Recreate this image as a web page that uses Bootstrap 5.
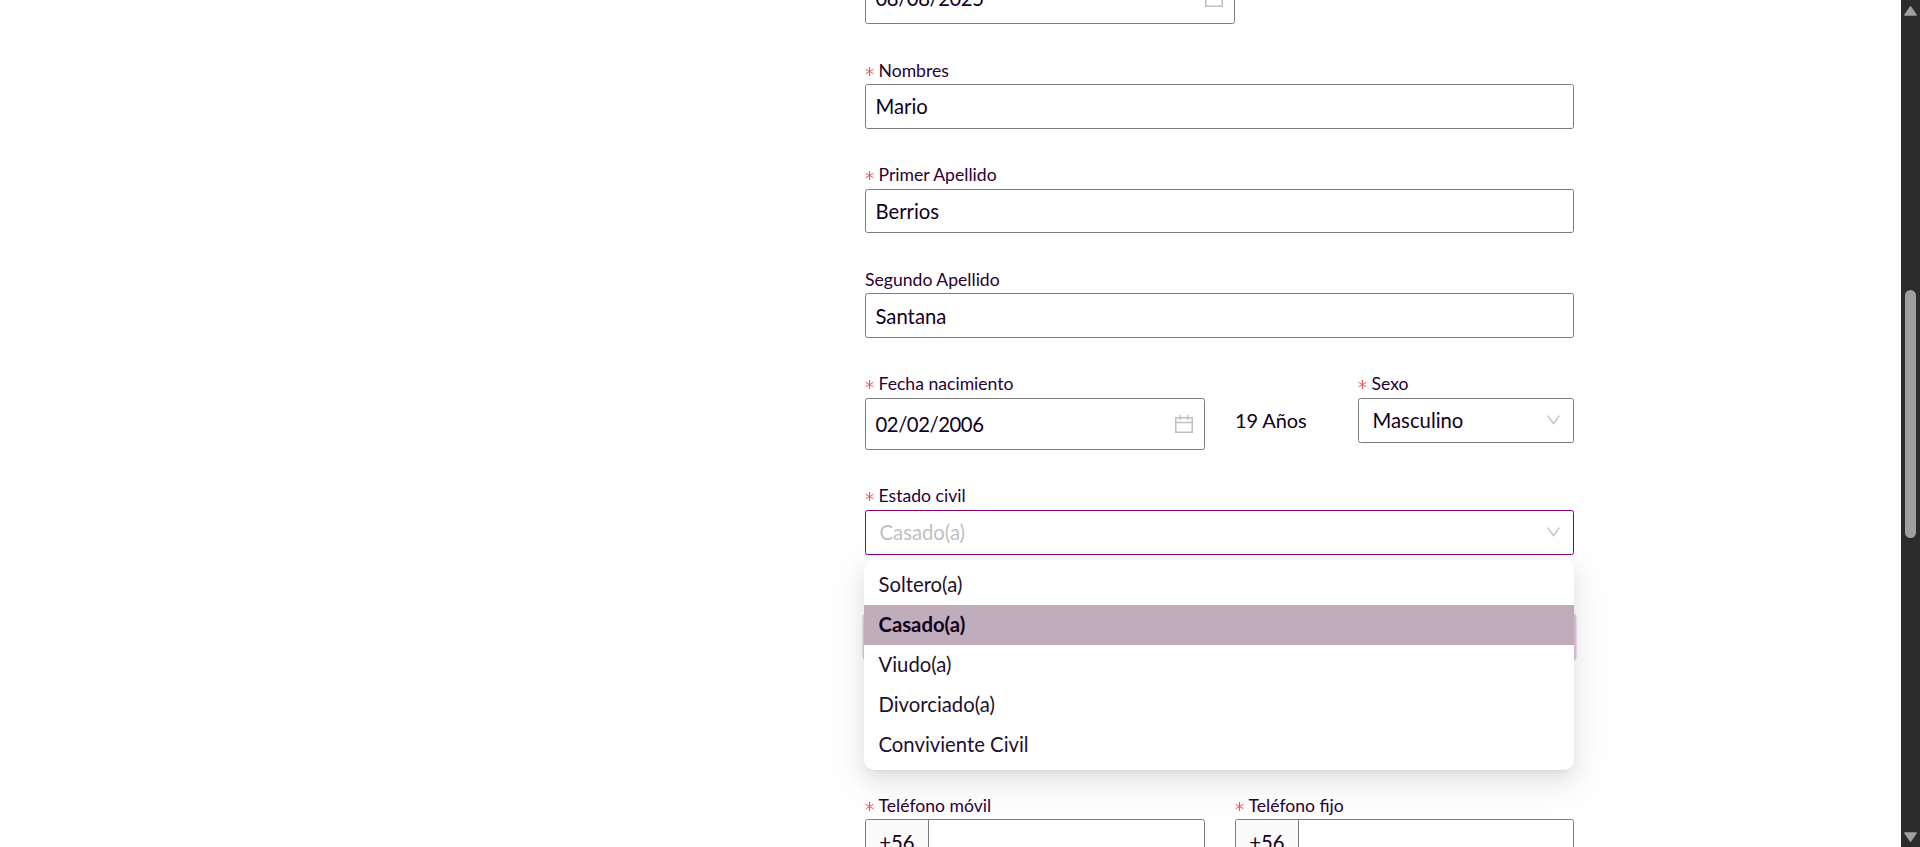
<!DOCTYPE html>
<html lang="es">
<head>
<meta charset="utf-8">
<meta name="viewport" content="width=device-width, initial-scale=1">
<title>Datos personales</title>
<link href="https://cdn.jsdelivr.net/npm/bootstrap@5.3.0/dist/css/bootstrap.min.css" rel="stylesheet">
<style>
  body { font-family: Lato, "Liberation Sans", sans-serif; font-size: 20px; color: #12001c; background: #fff; }
  .viewport { height: 847px; }
  .form-area { padding-left: 865px; padding-right: 327px; }
  .form-body { margin-top: -55.1px; }
  .field-label { display: block; height: 27.5px; line-height: 27.5px; font-size: 17.6px; color: #2a0035; white-space: nowrap; }
  .required-mark { width: 9px; height: 9px; margin-right: 4.5px; display: inline-block; vertical-align: 1px; }
  .field { margin-bottom: 32.5px; }
  .box { height: 44.5px; padding: 0 9.5px; border: 1px solid #7d7d80; border-radius: 2.5px; font-size: 20.3px; line-height: 1; color: #12001c; background: #fff; }
  .box-first { padding-bottom: 2px; }
  .box-date { height: 52px; padding-right: 11px; }
  .box-date span { letter-spacing: -.45px; }
  .box-select { height: 45px; padding: 0 13px 1px 13.5px; }
  .box-open { border-color: #800080; color: #bfbfbf; }
  .box-glow { border-color: #a44aa8; box-shadow: 0 0 0 2.5px rgba(128, 0, 128, .22); }
  .col-date-wide { width: 370px; }
  .col-half { width: 340px; }
  .col-sex { width: 216px; }
  .col-right { width: 339px; }
  .age { padding-top: 40px; line-height: 1; margin-left: 30px; margin-right: auto; letter-spacing: -.1px; }
  .box-phone { height: 52px; padding: 0; overflow: hidden; }
  .prefix { width: 63px; padding-bottom: 6px; background: #fafafa; border-right: 1px solid #7d7d80; }
  .choices { top: calc(100% + 5.5px); left: -1px; right: 0; height: 210px; padding: 5px 0; border-radius: 10px; background: #fff; z-index: 5;
    box-shadow: 0 7.5px 20px 0 rgba(0,0,0,.08), 0 3.75px 7.5px -5px rgba(0,0,0,.12), 0 11.25px 35px 10px rgba(0,0,0,.05); }
  .choice { height: 40px; padding-left: 14.5px; line-height: 39px; font-size: 20.3px; color: #220f2b; }
  .choice.selected { background: #bfadbc; font-weight: 700; line-height: 38px; color: #12001c; }
  .gap-row { margin-bottom: 132.2px; }
  .scroll-track { width: 19px; background: #2c2c2c; padding: 6px 0 5px; }
  .scroll-thumb { width: 11px; height: 248px; border-radius: 6px; background: #9f9f9f; margin-top: 274px; }
</style>
</head>
<body class="overflow-hidden">
<svg class="d-none">
  <symbol id="mark" viewBox="0 0 9 9"><path d="M4.5 0V9M.6 2.25L8.4 6.75M8.4 2.25L.6 6.75" fill="none" stroke="#ff4d4f" stroke-width="1"/></symbol>
  <symbol id="calendar" viewBox="0 0 18 18"><path d="M.75 2.75H17.25V17.25H.75ZM.75 7.5H17.25M5.3 0V5M12.7 0V5" fill="none" stroke="#bfbfbf" stroke-width="1.5"/></symbol>
  <symbol id="chevron" viewBox="0 0 13 10"><path d="M.6.6L6.5 8.7L12.4.6" fill="none" stroke="#bfbfbf" stroke-width="1.3"/></symbol>
</svg>
<div class="viewport d-flex overflow-hidden">
  <main class="form-area flex-grow-1 overflow-hidden">
    <form class="form-body">
      <div class="field col-date-wide">
        <span class="field-label"></span>
        <div class="box box-date d-flex align-items-center justify-content-between"><span>08/08/2025</span><svg width="18" height="18"><use href="#calendar"/></svg></div>
      </div>
      <div class="field">
        <span class="field-label"><svg class="required-mark"><use href="#mark"/></svg>Nombres</span>
        <div class="box box-first d-flex align-items-center">Mario</div>
      </div>
      <div class="field">
        <span class="field-label"><svg class="required-mark"><use href="#mark"/></svg>Primer Apellido</span>
        <div class="box d-flex align-items-center">Berrios</div>
      </div>
      <div class="field">
        <span class="field-label">Segundo Apellido</span>
        <div class="box d-flex align-items-center">Santana</div>
      </div>
      <div class="field d-flex">
        <div class="col-half flex-shrink-0">
          <span class="field-label"><svg class="required-mark"><use href="#mark"/></svg>Fecha nacimiento</span>
          <div class="box box-date d-flex align-items-center justify-content-between"><span>02/02/2006</span><svg width="18" height="18"><use href="#calendar"/></svg></div>
        </div>
        <div class="age">19 Años</div>
        <div class="col-sex flex-shrink-0">
          <span class="field-label"><svg class="required-mark"><use href="#mark"/></svg>Sexo</span>
          <div class="box box-select d-flex align-items-center justify-content-between"><span>Masculino</span><svg width="13" height="10"><use href="#chevron"/></svg></div>
        </div>
      </div>
      <div class="field">
        <span class="field-label"><svg class="required-mark"><use href="#mark"/></svg>Estado civil</span>
        <div class="position-relative">
          <div class="box box-select box-open d-flex align-items-center justify-content-between"><span>Casado(a)</span><svg width="13" height="10"><use href="#chevron"/></svg></div>
          <div class="choices position-absolute">
            <div class="choice">Soltero(a)</div>
            <div class="choice selected">Casado(a)</div>
            <div class="choice">Viudo(a)</div>
            <div class="choice">Divorciado(a)</div>
            <div class="choice">Conviviente Civil</div>
          </div>
        </div>
      </div>
      <div class="gap-row">
        <span class="field-label"></span>
        <div class="box box-glow"></div>
      </div>
      <div class="d-flex justify-content-between">
        <div class="col-half">
          <span class="field-label"><svg class="required-mark"><use href="#mark"/></svg>Teléfono móvil</span>
          <div class="box box-phone d-flex"><span class="prefix d-flex align-items-center justify-content-center">+56</span></div>
        </div>
        <div class="col-right">
          <span class="field-label"><svg class="required-mark"><use href="#mark"/></svg>Teléfono fijo</span>
          <div class="box box-phone d-flex"><span class="prefix d-flex align-items-center justify-content-center">+56</span></div>
        </div>
      </div>
    </form>
  </main>
  <aside class="scroll-track flex-shrink-0 d-flex flex-column align-items-center">
    <svg width="13" height="10" viewBox="0 0 13 10"><path d="M6.5 1L12 9H1Z" fill="#9f9f9f" stroke="#9f9f9f" stroke-width="1.6" stroke-linejoin="round"/></svg>
    <div class="scroll-thumb"></div>
    <svg class="mt-auto" width="13" height="10" viewBox="0 0 13 10"><path d="M6.5 9L12 1H1Z" fill="#9f9f9f" stroke="#9f9f9f" stroke-width="1.6" stroke-linejoin="round"/></svg>
  </aside>
</div>
<script src="https://cdn.jsdelivr.net/npm/bootstrap@5.3.0/dist/js/bootstrap.bundle.min.js"></script>
</body>
</html>
